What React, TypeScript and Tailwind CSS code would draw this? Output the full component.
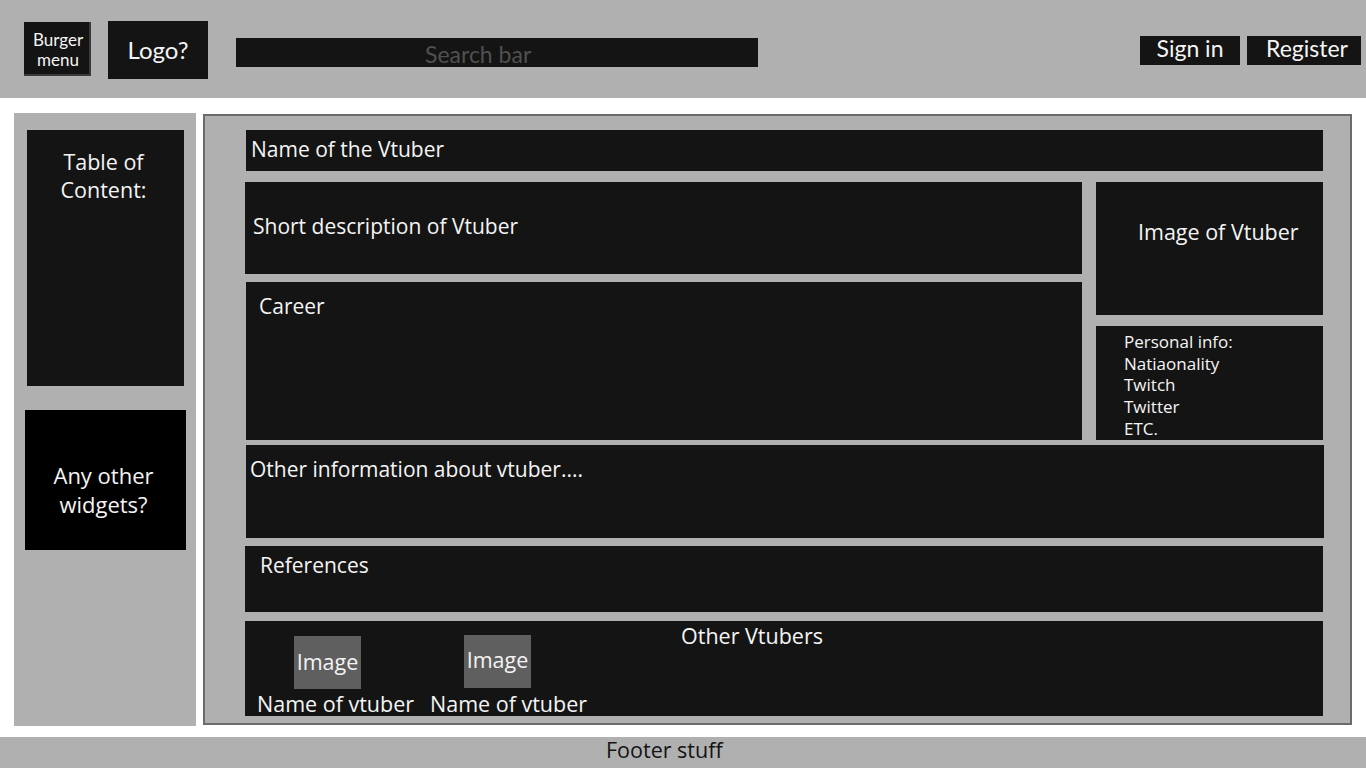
import React from "react";

const lato = { fontFamily: "Lato, 'Open Sans', sans-serif" };
const open = { fontFamily: "'Open Sans', Lato, sans-serif" };

export default function App() {
  return (
    <div className="w-[1366px] h-[768px] bg-white flex flex-col overflow-hidden text-[#f4f4f4]" style={open}>
      {/* Header */}
      <header className="h-[98px] shrink-0 bg-[#b0b0b0] flex items-start" style={lato}>
        <div className="ml-[24px] mt-[22px] w-[67px] h-[54px] bg-[#141414] border-r-2 border-b-2 border-[#3a3a3a] flex flex-col items-center justify-center pl-[3px] pt-[4px] text-[17px] leading-[20px]">
          <span>Burger</span>
          <span>menu</span>
        </div>
        <div className="ml-[17px] mt-[21px] w-[100px] h-[58px] bg-[#141414] flex items-center justify-center text-[24px]">
          Logo?
        </div>
        <div className="ml-[28px] mt-[38px] w-[522px] h-[29px] bg-[#141414] flex items-center pl-[189px] pt-[3px] text-[23px] text-[#505050]">
          Search bar
        </div>
        <div className="ml-auto mt-[36px] flex gap-[7px] mr-[5px]">
          <div className="w-[100px] h-[29px] bg-[#141414] flex items-center justify-center pb-[4px] text-[23px]">Sign in</div>
          <div className="w-[114px] h-[29px] bg-[#141414] flex items-center justify-center pb-[4px] pl-[6px] text-[23px]">Register</div>
        </div>
      </header>

      {/* Body */}
      <div className="flex mt-[15px] h-[613px] shrink-0">
        <aside className="ml-[14px] w-[182px] h-[613px] bg-[#b0b0b0] flex flex-col">
          <div className="ml-[13px] mt-[17px] w-[157px] h-[256px] bg-[#141414] pt-[18px] text-center text-[21.5px] leading-[28px]">
            <div className="pr-[4px]">Table of</div>
            <div className="pr-[4px]">Content:</div>
          </div>
          <div className="ml-[11px] mt-[24px] w-[161px] h-[140px] bg-black pt-[51px] text-center text-[22px] leading-[29px]">
            <div className="pr-[4px]">Any other</div>
            <div className="pr-[4px]">widgets?</div>
          </div>
        </aside>

        <main className="ml-[7px] mt-[1px] w-[1149px] h-[611px] border-2 border-[#6b6b6b] bg-[#b0b0b0] pl-[41px] pt-[14px] flex flex-col">
          <div className="w-[1077px] h-[41px] bg-[#141414] flex items-center pl-[5px] pb-[1px] text-[21px]">
            Name of the Vtuber
          </div>

          <div className="mt-[11px] flex h-[258px]">
            <div className="flex flex-col w-[837px] -ml-[1px]">
              <div className="h-[92px] bg-[#141414] pl-[8px] pt-[32px] text-[21px] leading-[24px]">
                Short description of Vtuber
              </div>
              <div className="mt-[8px] ml-[1px] h-[158px] bg-[#141414] pl-[13px] pt-[12px] text-[21px] leading-[24px]">
                Career
              </div>
            </div>
            <div className="ml-[14px] flex flex-col w-[227px]">
              <div className="h-[133px] bg-[#141414] pl-[42px] pt-[38px] text-[21.5px] leading-[24px]">
                Image of Vtuber
              </div>
              <div className="mt-[11px] h-[114px] bg-[#141414] pl-[28px] pt-[5px] text-[17px] leading-[21.7px]">
                <div>Personal info:</div>
                <div>Natiaonality</div>
                <div>Twitch</div>
                <div>Twitter</div>
                <div>ETC.</div>
              </div>
            </div>
          </div>

          <div className="mt-[5px] w-[1078px] h-[93px] bg-[#141414] pl-[4px] pt-[12px] text-[21px] leading-[24px]">
            Other information about vtuber....
          </div>

          <div className="mt-[8px] -ml-[1px] w-[1078px] h-[66px] bg-[#141414] pl-[15px] pt-[7px] text-[21px] leading-[24px]">
            References
          </div>

          <div className="mt-[9px] -ml-[1px] w-[1078px] h-[95px] bg-[#141414] pl-[12px] flex items-start">
            <div className="w-[155px] mt-[15px] flex flex-col">
              <div className="ml-[37px] w-[67px] h-[53px] bg-[#5f5f5f] flex items-center justify-center text-[21.5px] whitespace-nowrap">
                Image
              </div>
              <div className="mt-[3px] text-[21.5px] leading-[24px] whitespace-nowrap">Name of vtuber</div>
            </div>
            <div className="ml-[18px] w-[155px] mt-[14px] flex flex-col">
              <div className="ml-[34px] w-[67px] h-[53px] bg-[#5f5f5f] flex items-center justify-center pb-[3px] text-[21.5px] whitespace-nowrap">
                Image
              </div>
              <div className="mt-[4px] text-[21.5px] leading-[24px] whitespace-nowrap">Name of vtuber</div>
            </div>
            <div className="ml-[96px] mt-[3px] text-[21.5px] leading-[24px] whitespace-nowrap">Other Vtubers</div>
          </div>
        </main>
      </div>

      {/* Footer */}
      <footer className="mt-[11px] h-[31px] shrink-0 bg-[#b0b0b0] flex items-center pl-[606px] pb-[4px] text-[21.5px] text-[#141414]">
        Footer stuff
      </footer>
    </div>
  );
}
